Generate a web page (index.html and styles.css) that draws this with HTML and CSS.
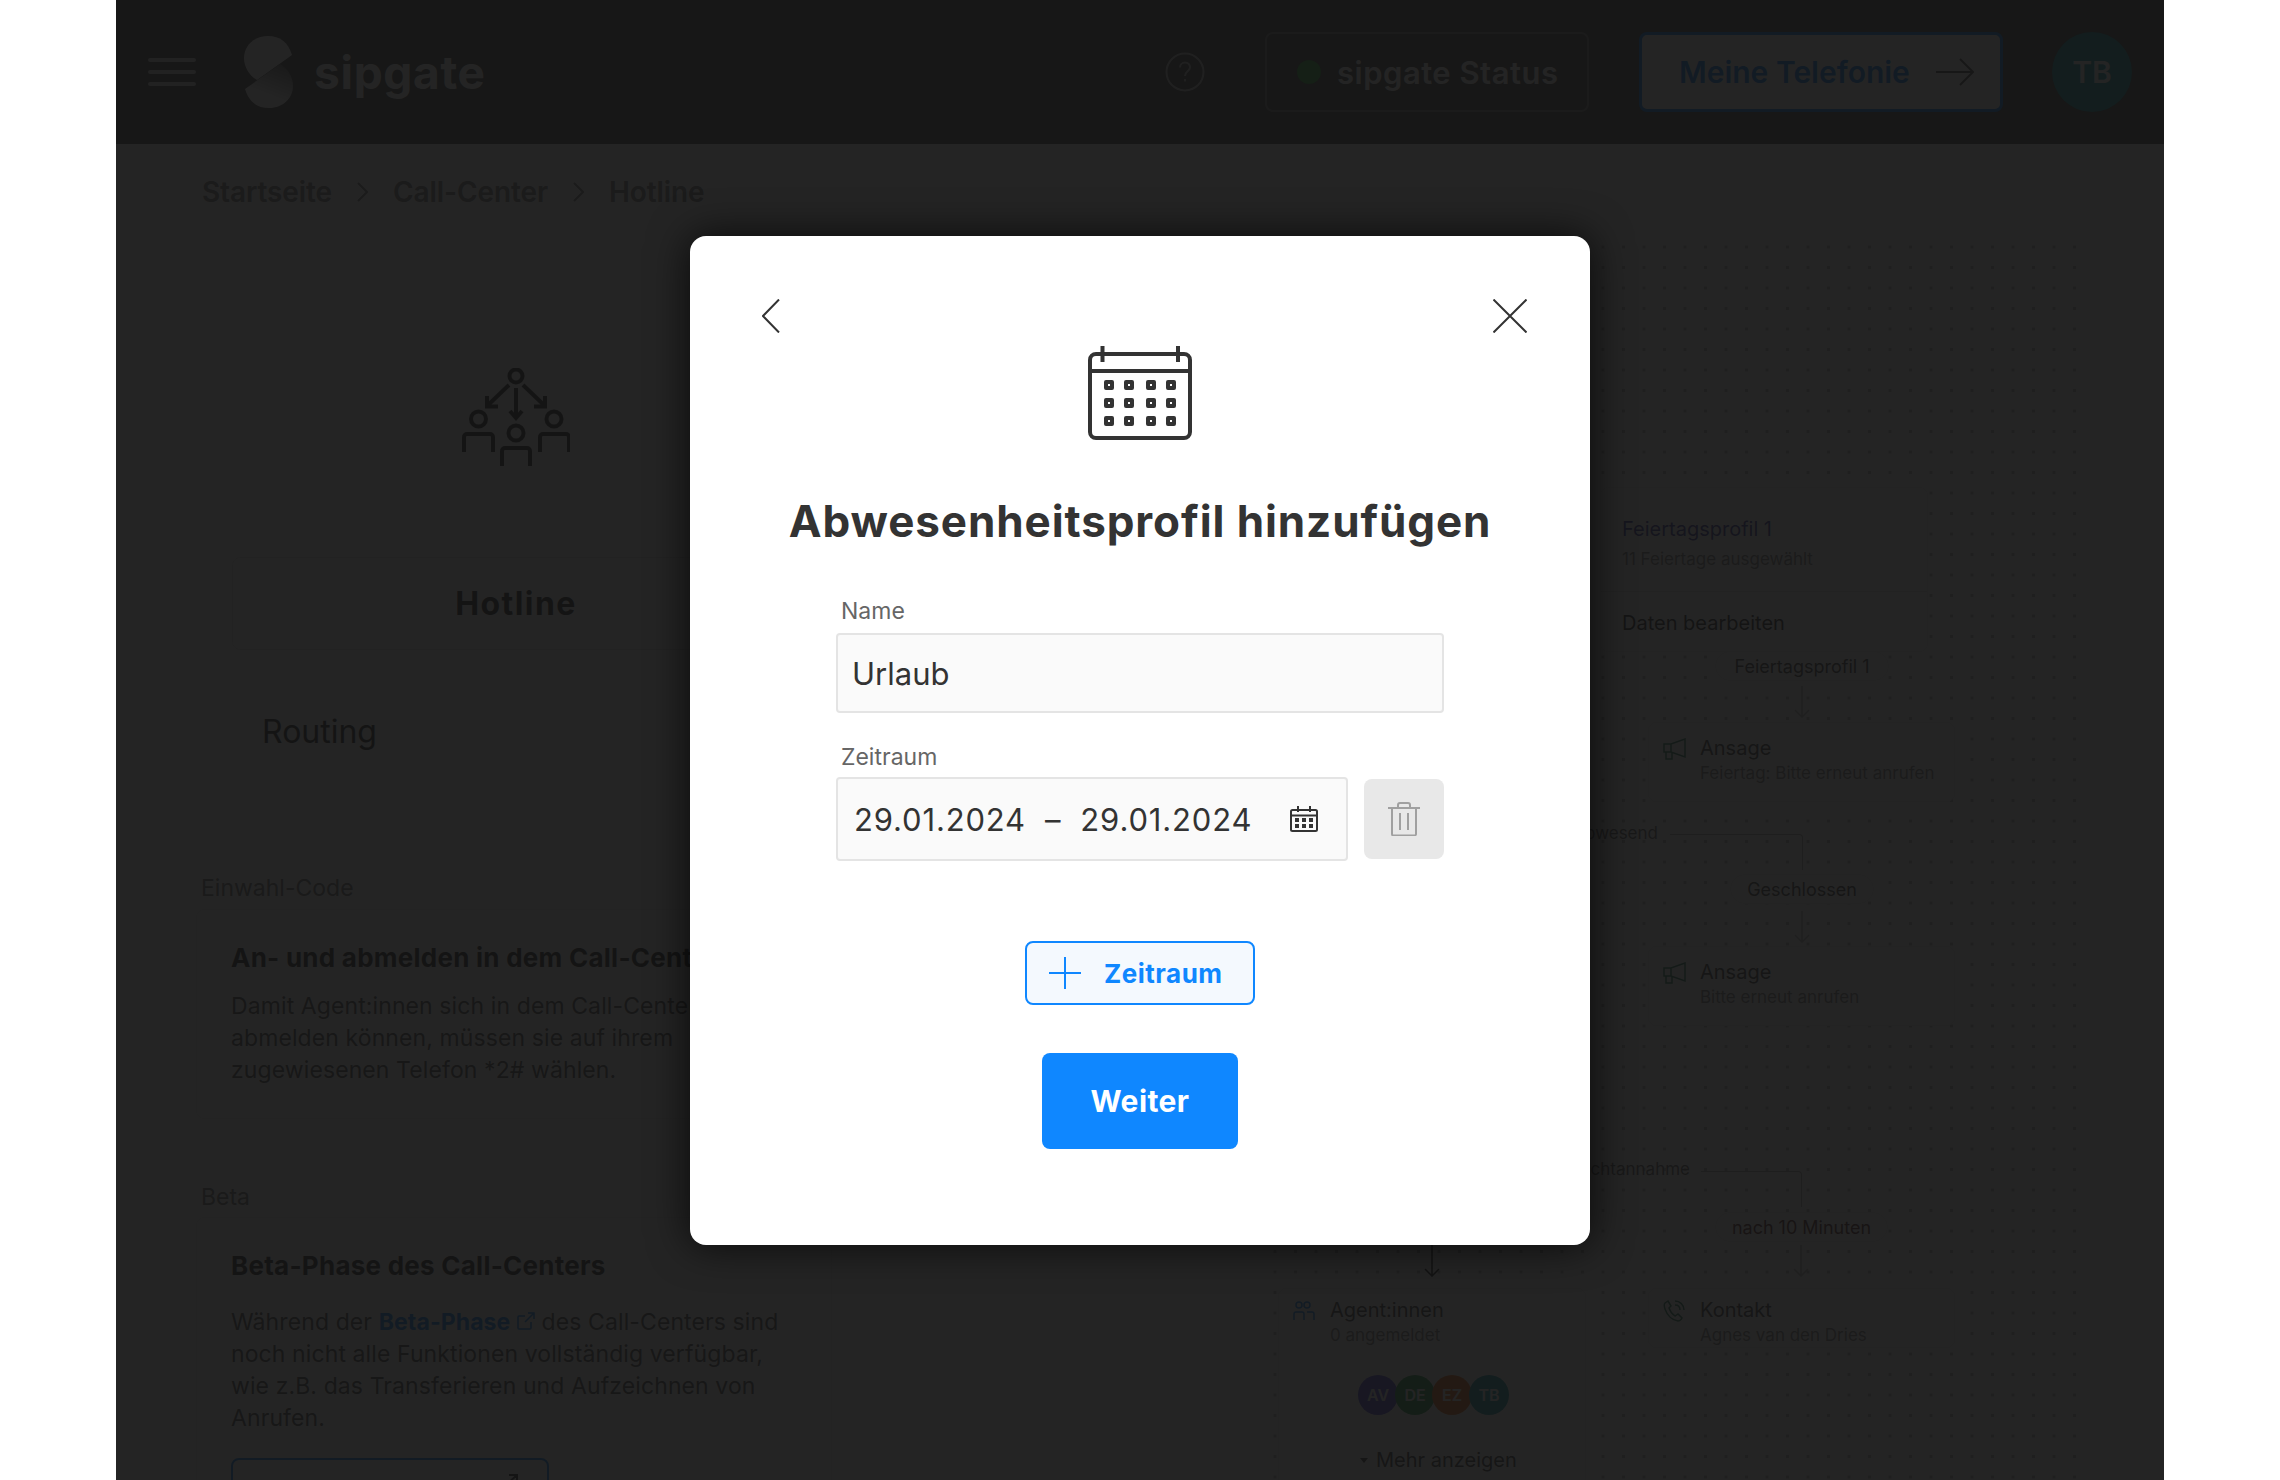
FILE: index.html
```html
<!DOCTYPE html>
<html lang="de">
<head>
    <meta charset="UTF-8">
    <meta name="viewport" content="width=device-width, initial-scale=1.0">
    <title>sipgate - Hotline</title>
    <link rel="stylesheet" href="styles.css">
</head>
<body>
    <div class="page">
        <div class="topbar">
            <div class="burger"><span></span><span></span><span></span></div>
            <svg class="logo" viewBox="0 0 50 72">
                <defs>
                    <linearGradient id="logoFade" x1="0.7" y1="0" x2="0.4" y2="0.7">
                        <stop offset="0" stop-color="#777"/>
                        <stop offset="1" stop-color="#fff"/>
                    </linearGradient>
                </defs>
                <path d="M48 19C44 6 36 0 24 0 10 0 0 10 0 22 0 32 6 40 13 44Z" fill="#fff"/>
                <path d="M1 53C5 66 13 72 25 72 39 72 49 62 49 50 49 40 43 32 36 28Z" fill="url(#logoFade)"/>
            </svg>
            <div class="brand">sipgate</div>
            <svg class="help" viewBox="0 0 40 40">
                <circle cx="20" cy="20" r="18.5"/>
                <path d="M15 15.5c0-3 2.300-5 5-5s5 2 5 4.800c0 4-5 4.200-5 8.700"/>
                <path d="M20 27v2.500"/>
            </svg>
            <div class="status-btn"><span class="status-dot"></span>sipgate Status</div>
            <div class="phone-btn">Meine Telefonie
                <svg class="phone-arrow" viewBox="0 0 38 28"><path d="M0 14h36M24 1l13 13-13 13"/></svg>
            </div>
            <div class="avatar-me">TB</div>
        </div>

        <div class="crumbs">
            <span>Startseite</span>
            <svg class="crumb-sep" viewBox="0 0 11 20"><path d="M1 1l9 9-9 9"/></svg>
            <span>Call-Center</span>
            <svg class="crumb-sep" viewBox="0 0 11 20"><path d="M1 1l9 9-9 9"/></svg>
            <span>Hotline</span>
        </div>

        <div class="left-col">
            <div class="hero">
                <div class="hero-circle"></div>
                <svg class="team-icon" viewBox="0 0 108 98">
                    <circle cx="54" cy="8" r="6.500"/>
                    <path d="M47 17L25 38M25 28v10.500h11M61 17l22 21M83 28v10.500H72M54 20v29M48 43l6 7 6-7"/>
                    <circle cx="16.500" cy="51" r="7.500"/>
                    <path d="M2 84V69a3 3 0 0 1 3-3h23a3 3 0 0 1 3 3v15"/>
                    <circle cx="54" cy="65" r="7.500"/>
                    <path d="M40 98V83a3 3 0 0 1 3-3h22a3 3 0 0 1 3 3v15"/>
                    <circle cx="92" cy="51" r="7.500"/>
                    <path d="M78 84V69a3 3 0 0 1 3-3h23a3 3 0 0 1 3 3v15"/>
                </svg>
            </div>
            <div class="hero-name">Hotline</div>
            <div class="routing">Routing</div>

            <div class="section-label">Einwahl-Code</div>
            <div class="panel">
                <h4 class="panel-title">An- und abmelden in dem Call-Center</h4>
                <p class="panel-text">Damit Agent:innen sich in dem Call-Center an- und<br>abmelden können, müssen sie auf ihrem<br>zugewiesenen Telefon *2# wählen.</p>
            </div>

            <div class="section-label section-beta">Beta</div>
            <div class="panel">
                <h4 class="panel-title">Beta-Phase des Call-Centers</h4>
                <p class="panel-text panel-text-wide">Während der <span class="link">Beta-Phase</span>
                    <svg class="ext-icon" viewBox="0 0 18 18"><path d="M14 10v6a1 1 0 0 1-1 1H2a1 1 0 0 1-1-1V5a1 1 0 0 1 1-1h6M11 1h6v6M17 1L8 10"/></svg>
                    des Call-Centers sind<br>noch nicht alle Funktionen vollständig verfügbar,<br>wie z.B. das Transferieren und Aufzeichnen von<br>Anrufen.</p>
                <div class="beta-btn">
                    <svg class="beta-arrow" viewBox="0 0 14 12"><path d="M1 11L12 1M4 1h8v8"/></svg>
                </div>
            </div>
        </div>

        <div class="flow">
            <div class="flow-menu">
                <div class="menu-title">Feiertagsprofil 1</div>
                <div class="menu-sub">11 Feiertage ausgewählt</div>
                <div class="menu-edit">Daten bearbeiten</div>
            </div>

            <div class="pill pill-holiday">Feiertagsprofil 1</div>
            <svg class="arrow arrow-holiday" viewBox="0 0 16 32"><path d="M8 0v31M1 24l7 7 7-7"/></svg>
            <div class="node node-ansage1">
                <svg class="node-icon" viewBox="0 0 24 22"><path d="M1 6h7l14-5v18L8 14H1zM3 14v7h6v-7M8 6v8"/></svg>
                <div>
                    <div class="node-title">Ansage</div>
                    <div class="node-sub">Feiertag: Bitte erneut anrufen</div>
                </div>
            </div>

            <div class="flow-label label-away">abwesend</div>
            <div class="line line-away"></div>
            <div class="pill pill-closed">Geschlossen</div>
            <svg class="arrow arrow-closed" viewBox="0 0 16 32"><path d="M8 0v31M1 24l7 7 7-7"/></svg>
            <div class="node node-ansage2">
                <svg class="node-icon" viewBox="0 0 24 22"><path d="M1 6h7l14-5v18L8 14H1zM3 14v7h6v-7M8 6v8"/></svg>
                <div>
                    <div class="node-title">Ansage</div>
                    <div class="node-sub">Bitte erneut anrufen</div>
                </div>
            </div>

            <div class="flow-label label-miss">Nichtannahme</div>
            <div class="line line-miss"></div>
            <div class="pill pill-late">nach 10 Minuten</div>
            <svg class="arrow arrow-late" viewBox="0 0 16 32"><path d="M8 0v31M1 24l7 7 7-7"/></svg>
            <svg class="arrow arrow-agents" viewBox="0 0 16 32"><path d="M8 0v31M1 24l7 7 7-7"/></svg>

            <div class="node node-agents">
                <svg class="node-icon agents-icon" viewBox="0 0 24 20"><circle cx="6" cy="4" r="3"/><circle cx="14" cy="4" r="3"/><path d="M1 19v-6a2 2 0 0 1 2-2h6a2 2 0 0 1 2 2v6M14 11h5a2 2 0 0 1 2 2v6"/></svg>
                <div>
                    <div class="node-title">Agent:innen</div>
                    <div class="node-sub">0 angemeldet</div>
                </div>
                <div class="agent-row">
                    <span class="agent agent-av">AV</span>
                    <span class="agent agent-de">DE</span>
                    <span class="agent agent-ez">EZ</span>
                    <span class="agent agent-tb">TB</span>
                </div>
                <div class="more"><span class="more-caret"></span>Mehr anzeigen</div>
            </div>

            <div class="node node-contact">
                <svg class="node-icon contact-icon" viewBox="0 0 24 22"><path d="M5 1L2 3c-1 1-1 3 0 6 2 6 7 11 13 12 2 0 3-1 4-3l-4-4-3 2c-3-2-5-5-6-8l2-2zM12 1c5 0 9 4 9 9M12 5c3 0 5 2 5 5"/></svg>
                <div>
                    <div class="node-title">Kontakt</div>
                    <div class="node-sub">Agnes van den Dries</div>
                </div>
            </div>
        </div>

        <div class="overlay">
            <div class="modal">
                <div class="modal-top">
                    <svg class="nav-icon back-icon" viewBox="0 0 18 34"><path d="M17 0.500L1 17l16 16.500"/></svg>
                    <svg class="nav-icon" viewBox="0 0 34 34"><path d="M0.500 0.500l33 33M33.500 0.500l-33 33"/></svg>
                </div>
                <svg class="modal-icon" viewBox="0 0 104 94">
                    <rect x="2" y="8" width="100" height="84" rx="6"/>
                    <path d="M2 25h100M14.500 0v16M90 0v16"/>
                    <g class="cal-dots">
                        <rect x="18" y="36" width="6" height="6"/><rect x="38" y="36" width="6" height="6"/><rect x="60" y="36" width="6" height="6"/><rect x="80" y="36" width="6" height="6"/>
                        <rect x="18" y="54" width="6" height="6"/><rect x="38" y="54" width="6" height="6"/><rect x="60" y="54" width="6" height="6"/><rect x="80" y="54" width="6" height="6"/>
                        <rect x="18" y="72" width="6" height="6"/><rect x="38" y="72" width="6" height="6"/><rect x="60" y="72" width="6" height="6"/><rect x="80" y="72" width="6" height="6"/>
                    </g>
                </svg>
                <h2 class="modal-title">Abwesenheitsprofil hinzufügen</h2>

                <div class="form">
                    <label class="field-label">Name</label>
                    <input class="text-input" type="text" value="Urlaub">
                    <label class="field-label field-label-gap">Zeitraum</label>
                    <div class="date-row">
                        <div class="date-input">
                            <span>29.01.2024</span>
                            <span class="date-dash">–</span>
                            <span>29.01.2024</span>
                            <svg class="date-icon" viewBox="0 0 28 26">
                                <rect x="1" y="4" width="26" height="21" rx="1.500"/>
                                <path d="M1 9.500h26M8 0v6M20 0v6"/>
                                <g class="date-dots">
                                    <rect x="5" y="12" width="4" height="4"/><rect x="12" y="12" width="4" height="4"/><rect x="19" y="12" width="4" height="4"/>
                                    <rect x="5" y="18" width="4" height="4"/><rect x="12" y="18" width="4" height="4"/><rect x="19" y="18" width="4" height="4"/>
                                </g>
                            </svg>
                        </div>
                        <div class="trash-btn">
                            <svg class="trash-icon" viewBox="0 0 32 34">
                                <path d="M0 6h32M10 6V3a2 2 0 0 1 2-2h8a2 2 0 0 1 2 2v3M4 6v26a1.500 1.500 0 0 0 1.500 1.500h21A1.500 1.500 0 0 0 28 32V6M12 11v17M20 11v17"/>
                            </svg>
                        </div>
                    </div>
                </div>

                <div class="add-btn">
                    <svg class="plus-icon" viewBox="0 0 32 32"><path d="M16 0v32M0 16h32"/></svg>
                    Zeitraum
                </div>
                <div class="next-btn">Weiter</div>
            </div>
        </div>
    </div>
</body>
</html>
```

FILE: styles.css
```css
* { box-sizing: border-box; }
body { margin: 0; background: #fff; font-family: Inter, "Liberation Sans", sans-serif; color: #333; }
h2, h4, p { margin: 0; }

.page { position: relative; width: 2048px; height: 1480px; margin: 0 auto; overflow: hidden; background: #fff; }

/* top bar */
.topbar { display: flex; align-items: center; height: 144px; padding: 0 32px; background: #4d4d4d; }
.burger { display: flex; flex-direction: column; gap: 8px; width: 48px; }
.burger span { height: 4px; border-radius: 2px; background: #fff; opacity: .8; }
.logo { width: 50px; height: 72px; margin-left: 48px; }
.brand { margin-left: 20px; font-size: 46px; font-weight: 700; color: #fff; letter-spacing: .7px; }
.help { width: 40px; height: 40px; margin-left: auto; fill: none; stroke: #fff; stroke-width: 2; opacity: .7; }
.status-btn { display: flex; align-items: center; width: 324px; height: 80px; margin-left: 60px; padding-left: 30px; border: 2px solid #888; border-radius: 8px; font-size: 31px; font-weight: 600; letter-spacing: .5px; color: #fff; white-space: nowrap; }
.status-dot { width: 24px; height: 24px; margin-right: 16px; border-radius: 50%; background: #39b54a; }
.phone-btn { display: flex; align-items: center; width: 364px; height: 80px; margin-left: 50px; padding-left: 37px; border: 3px solid #0f87ff; border-radius: 8px; background: #fff; font-size: 30px; font-weight: 600; color: #0f87ff; white-space: nowrap; }
.phone-arrow { width: 38px; height: 28px; margin-left: 26px; fill: none; stroke: #555; stroke-width: 2; }
.avatar-me { display: flex; align-items: center; justify-content: center; width: 80px; height: 80px; margin-left: 49px; border-radius: 50%; background: #20a0a8; font-size: 30px; font-weight: 600; color: #fff; }

/* breadcrumb */
.crumbs { display: flex; align-items: center; gap: 25px; height: 96px; padding-left: 86px; font-size: 28px; font-weight: 600; letter-spacing: -.1px; color: #808080; }
.crumb-sep { width: 11px; height: 20px; fill: none; stroke: #808080; stroke-width: 2; }

/* left column */
.left-col { width: 636px; margin-left: 80px; }
.hero { position: relative; height: 317px; padding-top: 128px; }
.hero-circle { position: absolute; left: 218px; top: 75px; width: 204px; height: 204px; border-radius: 50%; background: #f4f4f4; }
.team-icon { position: relative; display: block; width: 108px; height: 98px; margin-left: 266px; fill: none; stroke: #333; stroke-width: 4; }
.hero-name { display: flex; align-items: center; justify-content: center; width: 568px; height: 93px; margin-left: 36px; border: 1px solid #e6e6e6; border-radius: 8px; font-size: 32px; font-weight: 700; letter-spacing: 1.4px; }
.routing { display: flex; align-items: center; width: 568px; height: 93px; margin: 35px 0 0 36px; padding-left: 30px; font-size: 32px; background: #f8f8f8; border-radius: 8px; }

.section-label { height: 30px; margin: 95px 0 6px 5px; font-size: 23px; line-height: 30px; color: #777; }
.section-beta { margin-top: 63px; margin-bottom: 5px; }
.panel { padding: 30px 0 32px 34px; border: 1px solid #eee; border-radius: 8px; }
.panel-title { font-size: 26px; line-height: 36px; font-weight: 700; letter-spacing: .25px; white-space: nowrap; }
.panel-text { margin-top: 14px; font-size: 23px; line-height: 32px; letter-spacing: .1px; color: #555; white-space: nowrap; }
.panel-text-wide { margin-top: 22px; }
.link { font-weight: 700; color: #0f87ff; }
.ext-icon { width: 18px; height: 18px; fill: none; stroke: #0f87ff; stroke-width: 1.500; }
.beta-btn { display: flex; justify-content: flex-end; width: 318px; height: 70px; margin-top: 24px; padding: 14px 28px 0 0; border: 2px solid #0f87ff; border-radius: 8px; }
.beta-arrow { width: 14px; height: 12px; fill: none; stroke: #333; stroke-width: 2; }

/* routing diagram, nodes stand on a free canvas */
.flow { position: absolute; left: 1140px; top: 240px; width: 830px; height: 1240px; background-image: radial-gradient(circle, #bbb 1.5px, transparent 2px); background-size: 20.5px 20.5px; background-position: 8.75px -3.25px; }
.flow-menu { position: absolute; left: 344px; top: 247px; width: 328px; height: 165px; padding: 28px 21px; background: #fff; border-radius: 8px; border: 1px solid #eee; }
.menu-title { font-size: 20px; line-height: 26px; color: #3a3aa0; white-space: nowrap; }
.menu-sub { margin-top: 5px; font-size: 17px; line-height: 24px; color: #888; white-space: nowrap; }
.menu-edit { margin: 20px -21px 0; padding: 18px 21px 0; border-top: 1px solid #e5e5e5; font-size: 20px; line-height: 26px; white-space: nowrap; }

.pill { position: absolute; display: flex; align-items: center; justify-content: center; height: 30px; background: #fff; border: 1px solid #eee; border-radius: 15px; font-size: 18px; color: #444; white-space: nowrap; }
.pill-holiday { left: 459px; top: 411px; width: 174px; }
.pill-closed { left: 474px; top: 634px; width: 144px; }
.pill-late { left: 459px; top: 972px; width: 173px; color: #5a3030; }

.arrow { position: absolute; width: 16px; height: 32px; fill: none; stroke: #bbb; stroke-width: 1.500; }
.arrow-holiday { left: 538px; top: 446px; }
.arrow-closed { left: 538px; top: 671px; }
.arrow-late { left: 537px; top: 1005px; }
.arrow-agents { left: 168px; top: 1005px; stroke: #222; }

.flow-label { position: absolute; font-size: 17px; color: #666; white-space: nowrap; }
.label-away { right: 428px; top: 583px; }
.label-miss { right: 396px; top: 919px; }
.line { position: absolute; border-top: 1.500px solid #aaa; border-right: 1.500px solid #aaa; border-top-right-radius: 4px; }
.line-away { left: 414px; top: 594px; width: 133px; height: 36px; }
.line-miss { left: 445px; top: 931px; width: 101px; height: 36px; }

.node { position: absolute; display: flex; align-items: flex-start; gap: 13px; width: 307px; padding: 13px 14px; background: #fff; border: 1px solid #e8e8e8; border-radius: 8px; }
.node-ansage1 { left: 392px; top: 482px; height: 80px; }
.node-ansage2 { left: 392px; top: 706px; height: 80px; }
.node-agents { left: 22px; top: 1048px; width: 308px; height: 240px; padding-top: 9px; flex-wrap: wrap; align-content: flex-start; }
.node-contact { left: 392px; top: 1048px; height: 60px; padding-top: 9px; }
.node-icon { flex: none; width: 24px; height: 22px; margin-top: 2px; fill: none; stroke: #2e7d5b; stroke-width: 1.500; }
.agents-icon { stroke: #0f87ff; }
.contact-icon { stroke: #2e7d5b; }
.node-title { font-size: 20px; line-height: 24px; color: #444; white-space: nowrap; }
.node-sub { margin-top: 1px; font-size: 17px; line-height: 24px; color: #888; white-space: nowrap; }
.agent-row { display: flex; width: 100%; margin-top: 15px; padding-left: 65px; }
.agent { display: flex; flex: none; align-items: center; justify-content: center; width: 40px; height: 40px; margin-right: -3px; border-radius: 50%; font-size: 16px; font-weight: 600; color: #fff; }
.agent-av { background: #5a50e0; }
.agent-de { background: #30a050; }
.agent-ez { background: #f07020; }
.agent-tb { background: #20a0a8; }
.more { display: flex; align-items: center; gap: 8px; width: 100%; margin-top: 20px; padding-left: 67px; font-size: 20px; line-height: 24px; color: #444; white-space: nowrap; }
.more-caret { width: 0; height: 0; border-left: 4px solid transparent; border-right: 4px solid transparent; border-top: 5px solid #444; }

/* dialog */
.overlay { position: absolute; left: 0; top: 0; right: 0; bottom: 0; display: flex; align-items: flex-start; justify-content: center; padding-top: 236px; background: rgba(18, 18, 18, .925); }
.modal { width: 900px; height: 1009px; padding: 63px 0 0; background: #fff; border-radius: 16px; box-shadow: 0 0 40px rgba(0, 0, 0, .75); }
.modal-top { display: flex; justify-content: space-between; padding: 0 63px 0 72px; }
.nav-icon { width: 34px; height: 34px; fill: none; stroke: #333; stroke-width: 2; }
.back-icon { width: 18px; }
.modal-icon { display: block; width: 104px; height: 94px; margin: 13px auto 0; fill: none; stroke: #333; stroke-width: 4; }
.cal-dots rect { stroke-linejoin: round; }
.modal-title { margin-top: 53px; font-size: 44px; line-height: 56px; font-weight: 700; letter-spacing: .9px; text-align: center; white-space: nowrap; }

.form { margin: 48px 146px 0; }
.field-label { display: block; height: 28px; padding-left: 5px; margin-bottom: 8px; font-size: 23px; line-height: 28px; color: #666; }
.field-label-gap { margin: 30px 0 6px; }
.text-input { display: block; width: 100%; height: 80px; padding: 0 14px; border: 2px solid #e4e4e4; border-radius: 4px; background: #fafafa; font-family: inherit; font-size: 31px; color: #333; }
.date-row { display: flex; align-items: center; gap: 16px; }
.date-input { display: flex; align-items: center; gap: 19px; width: 512px; height: 84px; padding: 0 28px 0 16px; border: 2px solid #e4e4e4; border-radius: 4px; background: #fafafa; font-size: 31px; letter-spacing: .85px; white-space: nowrap; }
.date-icon { width: 28px; height: 26px; margin-left: auto; fill: none; stroke: #333; stroke-width: 2; }
.date-dots rect { fill: #333; stroke: none; }
.trash-btn { display: flex; align-items: center; justify-content: center; width: 80px; height: 80px; background: #e8e8e8; border-radius: 8px; }
.trash-icon { width: 32px; height: 34px; fill: none; stroke: #a0a0a0; stroke-width: 2; }

.add-btn { display: flex; align-items: center; gap: 23px; width: 230px; height: 64px; margin: 80px auto 0; padding-left: 22px; border: 2px solid #0f87ff; border-radius: 8px; background: #f4f9fe; font-size: 26px; font-weight: 700; letter-spacing: .5px; color: #0f87ff; }
.plus-icon { width: 32px; height: 32px; fill: none; stroke: #0f87ff; stroke-width: 2; }
.next-btn { display: flex; align-items: center; justify-content: center; width: 196px; height: 96px; margin: 48px auto 0; background: #0f87ff; border-radius: 8px; font-size: 30px; font-weight: 700; letter-spacing: .4px; color: #fff; }
```
